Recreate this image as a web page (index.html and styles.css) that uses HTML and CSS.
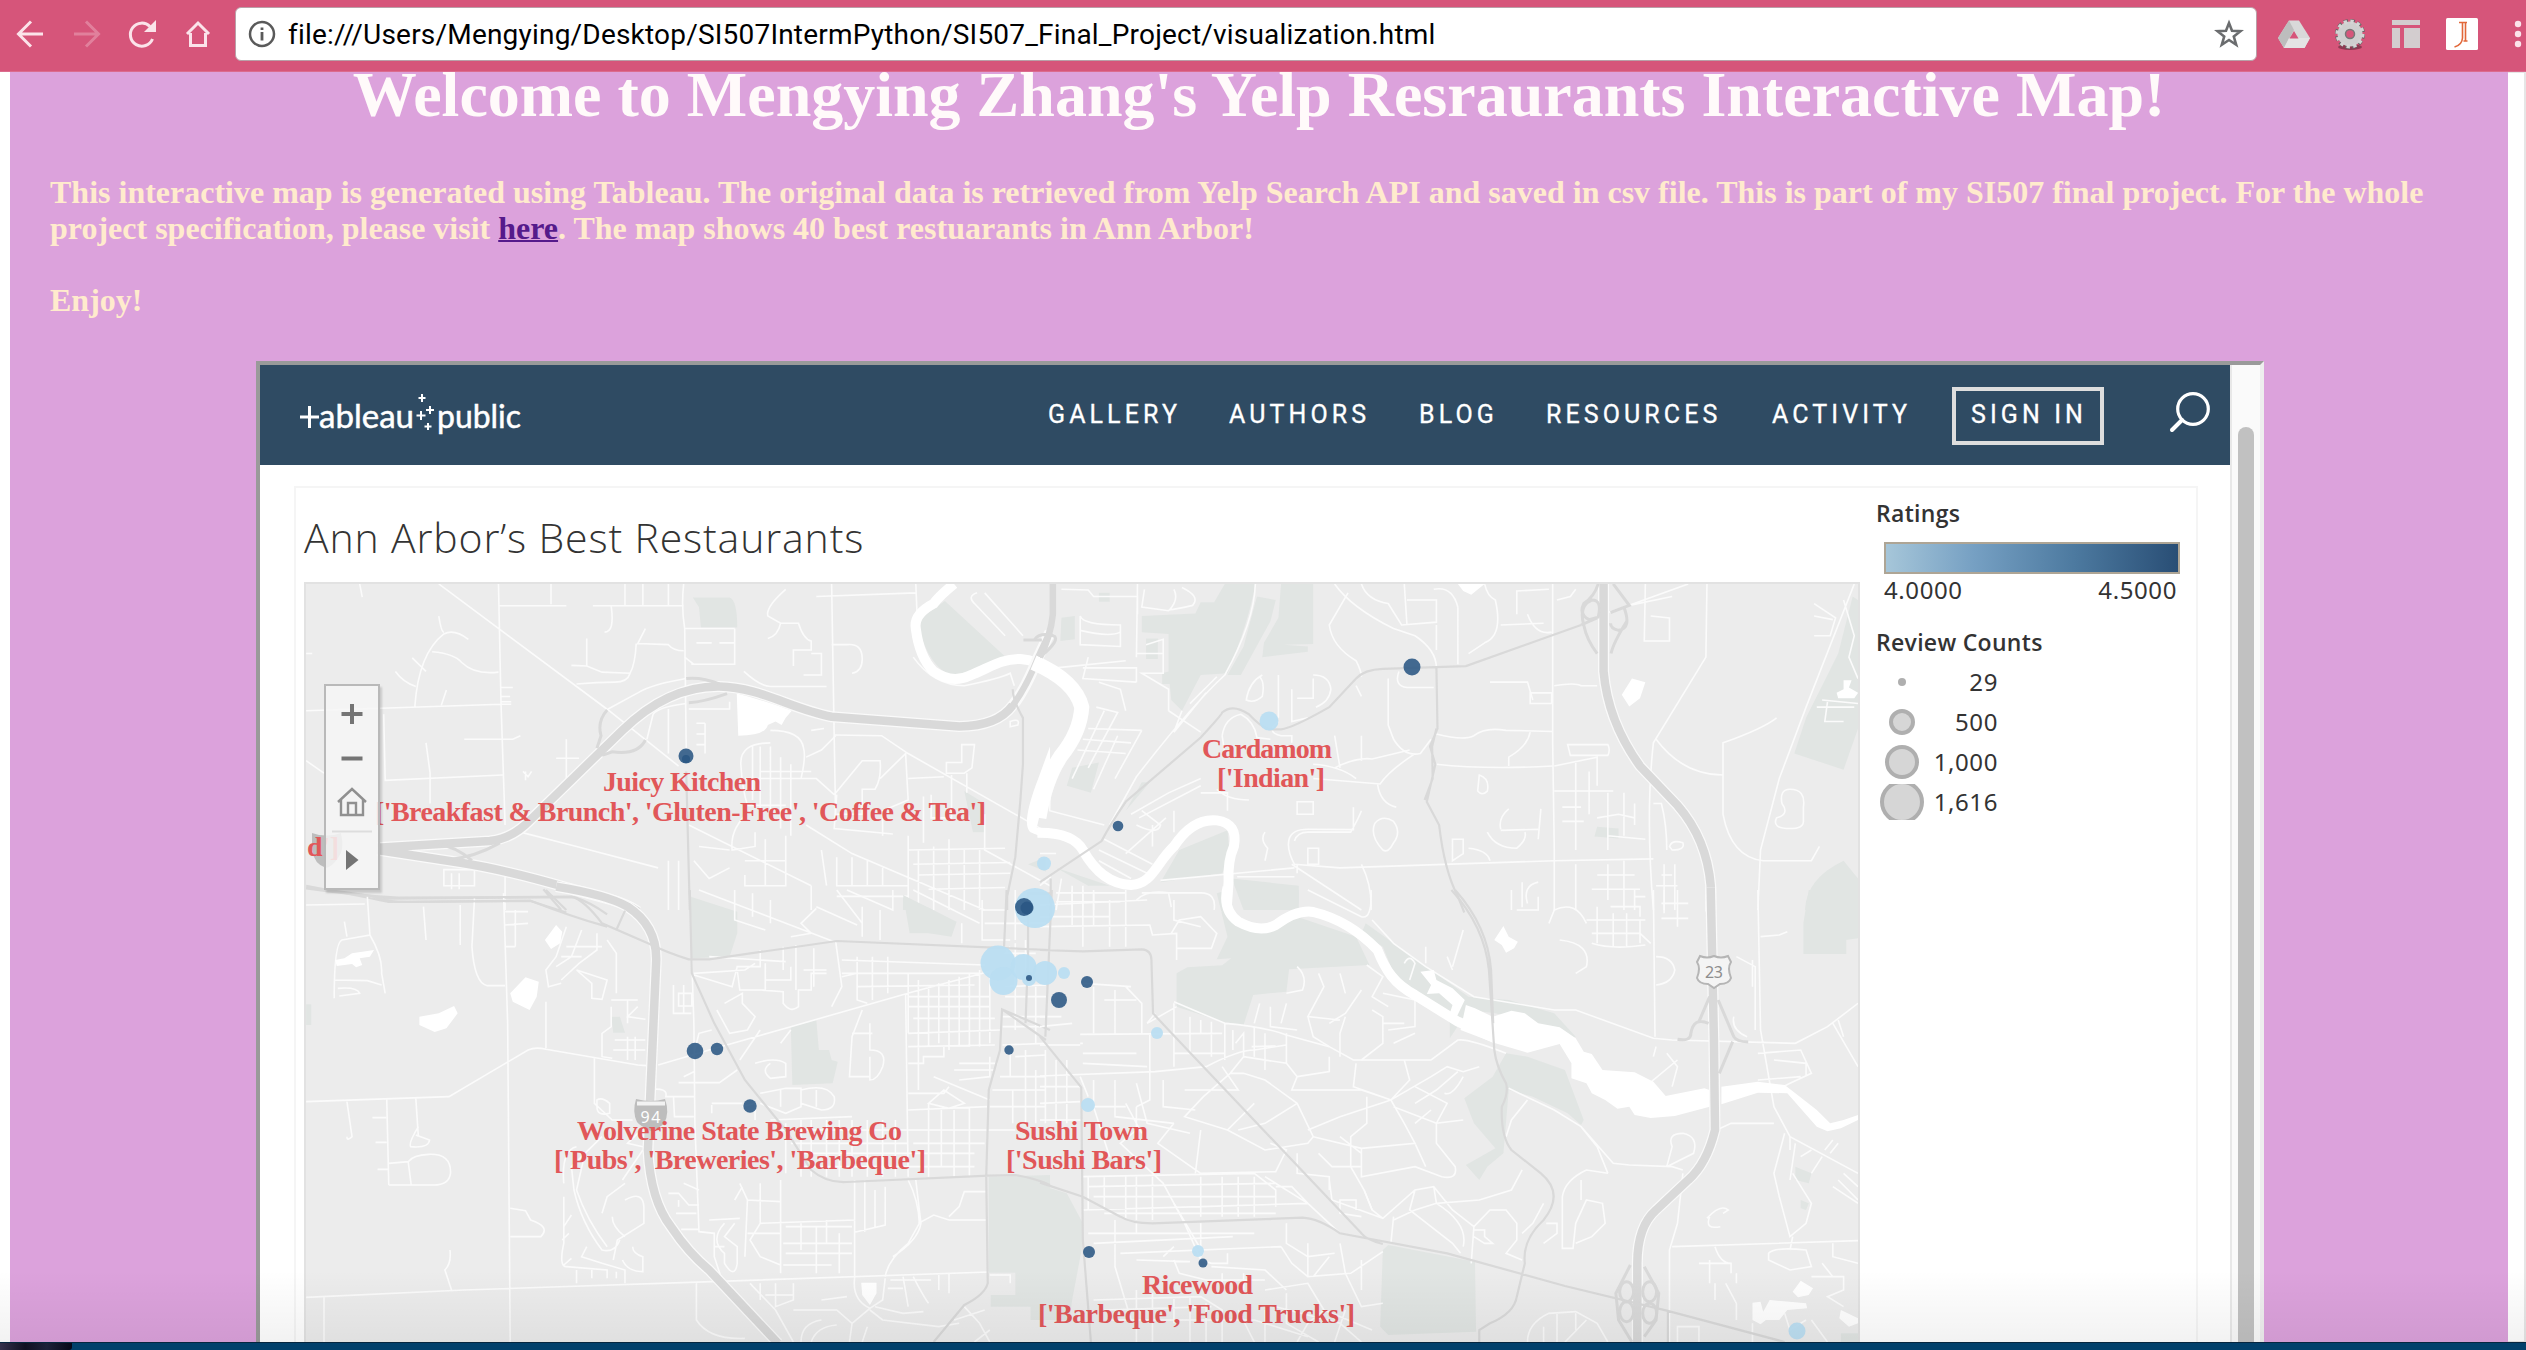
FILE: index.html
```html
<!DOCTYPE html>
<html lang="en">
<head>
<meta charset="utf-8">
<title>visualization.html</title>
<link rel="stylesheet" href="styles.css">
</head>
<body>
<header class="toolbar">
  <svg class="nav-icons" width="235" height="71" viewBox="0 0 235 71">
    <g fill="none" stroke="#fbe3ea" stroke-width="3">
      <path d="M43 34H19M31 21.500L18.500 34L31 46.500"/>
      <path opacity=".3" d="M74 34H98M86 21.500L98.500 34L86 46.500"/>
      <path d="M152.500 39A11.500 11.500 0 1 1 150 26.500"/>
      <path d="M187 34L198 23L209 34M190.500 33V45.500H205.500V33"/>
    </g>
    <path fill="#fbe3ea" d="M156 20V32H144Z"/>
  </svg>
  <div class="omnibox">
    <svg width="28" height="28" viewBox="0 0 28 28"><circle cx="14" cy="14" r="12" fill="none" stroke="#5a5a5a" stroke-width="2.500"/><path d="M14 12V20.500M14 7.500V10" stroke="#5a5a5a" stroke-width="2.800"/></svg>
    <span class="url">file:///Users/Mengying/Desktop/SI507IntermPython/SI507_Final_Project/visualization.html</span>
    <svg class="star" width="30" height="30" viewBox="0 0 30 30"><path d="M15 4L18 11.800L26.500 12.200L19.800 17.500L22.200 25.800L15 21L7.800 25.800L10.200 17.500L3.500 12.200L12 11.800Z" fill="none" stroke="#6a6c6e" stroke-width="2.600"/></svg>
  </div>
  <svg class="ext" width="269" height="71" viewBox="2257 0 269 71">
    <path fill="#d9d9d9" d="M2289 20.500H2299L2310 38L2304.500 48H2284L2278 38Z"/>
    <path fill="#bdbdbd" d="M2289 20.500L2294 30L2284 48L2278 38Z"/>
    <path fill="#e4e4e4" d="M2289 38H2310L2304.500 48H2284Z"/>
    <path fill="#d6557a" d="M2294 31L2298.500 38.500H2289.500Z"/>
    <ellipse cx="2350" cy="47" rx="12" ry="3" fill="#8f3a52"/>
    <circle cx="2350" cy="34" r="12.500" fill="none" stroke="#666" stroke-width="5" stroke-dasharray="4.200 2.345"/>
    <circle cx="2350" cy="34" r="8.500" fill="none" stroke="#cfcfcf" stroke-width="8"/>
    <circle cx="2350" cy="34" r="12.500" fill="none" stroke="#d5d5d5" stroke-width="4" stroke-dasharray="3.200 3.345"/>
    <circle cx="2350" cy="34" r="4.500" fill="#d6557a" stroke="#777" stroke-width="1.500"/>
    <path fill="#d3cdcf" d="M2392 20H2420V25H2392ZM2392 28H2400V48H2392ZM2404 28H2420V48H2404Z"/>
    <rect x="2446" y="18" width="32" height="32" rx="1.500" fill="#fff"/>
    <path d="M2459 22.500H2467M2462.500 23V38Q2462 45 2454.500 47M2465.500 23V41M2463.500 41H2467.500" fill="none" stroke="#e2683a" stroke-width="1.600"/>
    <g fill="#fbe3ea"><circle cx="2518" cy="24" r="3.200"/><circle cx="2518" cy="34" r="3.200"/><circle cx="2518" cy="44" r="3.200"/></g>
  </svg>
</header>

<main class="page">
  <h1>Welcome to Mengying Zhang's Yelp Resraurants Interactive Map!</h1>
  <p class="intro">This interactive map is generated using Tableau. The original data is retrieved from Yelp Search API and saved in csv file. This is part of my SI507 final project. For the whole<br>project specification, please visit <a href="#">here</a>. The map shows 40 best restuarants in Ann Arbor!<br><br>Enjoy!</p>

  <div class="frame">
    <div class="frame-body">
      <nav class="site-nav">
        <svg class="logo" width="226" height="60" viewBox="0 0 226 60">
          <g class="logo-text"><text x="19" y="36.500" textLength="95" lengthAdjust="spacingAndGlyphs">ableau</text><text x="137" y="36.500" textLength="84" lengthAdjust="spacingAndGlyphs">public</text></g>
          <path d="M122 3V11M118.500 7H125.500M121 20V29M116.500 24.500H125.500M130 15V23M126 19H134M128 32V39M124.500 35.500H131.500" fill="none" stroke="#fff" stroke-width="2"/>
          <path d="M0 26H19M9.500 15V37" stroke="#fff" stroke-width="3"/>
        </svg>
        <div class="links"><span>GALLERY</span><span>AUTHORS</span><span>BLOG</span><span>RESOURCES</span><span>ACTIVITY</span></div>
        <span class="signin">SIGN IN</span>
        <svg class="search" width="44" height="44" viewBox="0 0 44 44"><circle cx="25" cy="18" r="15.300" fill="none" stroke="#fff" stroke-width="3.200"/><path d="M14 29L4 39" stroke="#fff" stroke-width="4" stroke-linecap="round"/></svg>
      </nav>
      <section class="dashboard">
        <div class="view">
          <h2>Ann Arbor’s Best Restaurants</h2>
          <div class="map">
          <svg width="1552" height="760" viewBox="306 584 1552 760">
            <!-- northwest -->
            <g transform="translate(250 350) scale(.5102 .35714)">
              <g class="park"><path d="M868 693L940 693Q955 700 955 777L884 777L880 720ZM1362 703L1480 858L1400 910Q1360 925 1330 850Q1300 770 1325 740ZM1400 1235L1440 1270V1350H1417ZM1525 1440L1560 1420V1460ZM1280 1530L1340 1568H1280ZM864 1535L930 1568H864Z"/></g>
              <g class="minor">
                <path d="M370 655L702 1008L840 1165M487 655L492 990L500 1330M487 716H620M590 655V712M672 716H850M708 718Q715 790 695 790M850 655Q845 720 852 780L855 1115M820 655V714M770 655V714M735 655V714M215 655L220 692M110 1010L492 992H512M262 1020L265 1205L495 1190M370 745Q375 790 380 790M323 1000Q330 850 380 795Q400 780 428 810M357 845Q400 850 415 875Q440 910 487 902M318 862L345 900M285 900Q300 930 325 942M375 995L385 952M492 945H515M492 970H510M492 985H512"/>
                <path d="M775 780L760 822L820 825Q830 842 850 842M757 822Q755 880 745 905L690 902L660 885V808M745 905Q740 930 715 930Q680 930 640 935M660 885L630 883M852 780H950M865 880H950V780M875 820H905M920 820H950M852 860L870 880M855 920Q790 935 760 960L702 1005M855 990Q800 1000 790 1020L778 1090M940 985V1005H860M820 1005V1130M1110 690L1305 680M1140 655L1145 1080L1148 1320M1305 655L1308 760M1050 670Q1010 720 1015 745L1040 765H1075Q1085 810 1100 815V840H1065V885M1040 765Q1035 800 1015 808M1100 850H1120V910H1085M968 900Q1000 942 1020 942L1130 942M1140 825H1170Q1200 820 1200 865Q1200 900 1180 905M1425 680Q1405 690 1420 710L1480 800M1440 680L1515 800M1300 860Q1340 940 1400 940Q1470 920 1490 905L1498 940"/>
                <path d="M1145 1078L1238 1080L1290 1130L1568 1355M1020 1065Q1080 1065 1085 1115Q1090 1140 1080 1200M1020 1100Q960 1100 962 1160Q965 1230 975 1275H1050M985 1110V1260M1000 1110V1320M1020 1110V1300M1040 1140V1340M1060 1160V1360M1000 1180H1100M970 1200H1110L1145 1245M1145 1245L1200 1150H1235Q1238 1200 1225 1230L1200 1230V1300H1150M1235 1200L1285 1130L1290 1260L1240 1290L1240 1360M1290 1200L1360 1195M1395 1105H1420L1415 1170L1400 1185H1365V1155H1395ZM1375 1190V1310H1335V1245M1440 1300V1400L1568 1500M1320 1250V1380M1405 1185V1240M1150 1245L1145 1340L1260 1355"/>
                <path d="M860 1330L1100 1500M980 1290Q940 1340 945 1400L990 1390V1350M1010 1370V1500M1050 1360V1500H970V1470M970 1430H1050M880 1390L940 1400M870 1430L900 1480L940 1450M1090 1330L1180 1410L1440 1568M1120 1400L1130 1500M1150 1420V1500H1290M1180 1500V1420M1210 1500V1430M1240 1500V1450M1290 1360V1540M1310 1400V1550M1340 1390V1568M1370 1370V1568M1400 1400V1568M1430 1400V1568M1290 1400L1480 1395M1300 1440L1490 1435M1310 1470L1490 1465M1330 1510L1480 1505M1100 1500V1568M1150 1530H1290M820 1430V1568M840 1430V1568M620 1090V1230M600 1143H645M420 1090L515 1090L530 1080M345 1100L353 1185V1270M380 1455H440V1500H380ZM395 1465V1510M410 1465V1510M440 1430L440 1460M500 1470V1568M530 1350L640 1390L800 1450M110 850H122M110 1150L145 1185M540 1180V1205M535 1180L545 1195L552 1180M875 1045H892M875 1075H892M875 1105H892M892 1045V1130M1100 1065L1125 1060M1148 1080L1120 1120L1090 1140M1490 1040Q1510 1030 1505 1050L1490 1055Z"/>
              </g>
              <g class="water"><path d="M954 962Q1005 980 1062 1010L1050 1030L1042 1050L1030 1040L1015 1050Q1010 1080 957 1080Z"/><path class="river" d="M1380 655Q1350 690 1340 710Q1300 740 1305 780Q1312 860 1340 900Q1375 935 1410 912C1450 890 1470 865 1510 865C1540 868 1555 885 1575 900"/><path d="M1568 1110L1545 1200Q1510 1330 1530 1350Q1550 1365 1568 1358V1342L1542 1338L1568 1180Z"/></g>
              <g class="road">
                <path class="case" d="M250 1394L470 1375Q515 1368 550 1315L730 1065Q820 940 920 942C1000 944 1060 1005 1140 1027L1390 1054Q1465 1054 1495 995Q1520 950 1545 860L1568 790M250 1400L410 1435Q500 1455 620 1505L710 1540Q740 1552 760 1572"/>
                <path class="hwy" d="M250 1394L470 1375Q515 1368 550 1315L730 1065Q820 940 920 942C1000 944 1060 1005 1140 1027L1390 1054Q1465 1054 1495 995M250 1400L410 1435Q500 1455 620 1505L710 1540Q740 1552 760 1572"/>
                <path class="ramped" d="M1490 1005Q1520 950 1545 860L1568 790"/>
                <path class="mid" d="M370 1385Q405 1390 435 1430M390 1427Q440 1420 490 1380M855 920Q885 915 920 935M860 988Q890 985 935 962M700 1008Q680 1040 688 1080L680 1115M775 1092Q760 1135 710 1125L690 1135M1516 812H1552"/>
                <path class="art" d="M855 1180L862 1568M110 1505Q180 1515 270 1536L635 1532Q665 1545 700 1580M110 1500Q220 1530 270 1545L550 1543L620 1575M575 1510L610 1568M1495 950Q1495 980 1515 1030L1515 1160L1510 1260L1500 1420L1484 1530V1568M1500 990L1525 920"/>
              </g>
            </g>
            <!-- northeast -->
            <g transform="translate(1040 350) scale(.53571 .35714)">
              <g class="park"><path d="M110 680H130V705H110ZM190 745L290 738L300 706H325L345 655L402 655Q390 760 350 905L300 910L265 1010L245 980L242 935H228V905L240 900L240 795L190 790ZM405 690L440 700L430 760Q415 800 375 910H350L380 830ZM450 655H510V823L455 825L500 830V845L415 860L418 820L445 750ZM40 750L65 745V810L38 815ZM198 808H220V865H198ZM60 1170L110 1155L95 1240L50 1220ZM190 1210H205L160 1290ZM350 1345L355 1430L340 1465L225 1490L260 1400ZM358 1480L483 1500V1568H380ZM1517 690L1527 700V1060L1500 1175L1408 1130L1430 1030L1490 850ZM1040 1335L1080 1340V1368L1035 1362ZM1500 1430L1527 1480V1568H1428Q1430 1480 1500 1430ZM30 1450L130 1500L90 1500Z"/></g>
              <g class="minor">
                <path d="M40 670L90 672L100 690L182 690V740M182 655L180 860M75 745Q80 770 150 770V830L75 825ZM75 785Q130 805 150 790M195 670L190 720L240 730Q260 700 250 670M265 665Q300 690 285 715Q255 725 240 728M180 850L230 850V810L198 825M402 655Q400 760 345 910Q280 1000 180 1195L130 1330M230 850V905L190 905L240 950V1010M160 870L30 890M90 860L80 920L180 930M80 890H180V930M110 930L150 950L160 1010M105 1000L145 1015L90 1170M90 1060L190 1065M80 1090L170 1100M70 1120L160 1130M120 1010L60 1200M145 1080L100 1230M190 1065L140 1200M240 1010L300 1070M265 1010L250 1070L310 960M330 915L280 990M10 900L60 950L80 1060L20 1180L18 1290L120 1330"/>
                <path d="M550 655Q580 720 660 780L700 800Q740 840 740 890M575 680L540 770Q545 830 590 870Q600 900 600 915M600 655Q610 700 650 710L675 770L740 762V700H685M680 655L685 770M830 655Q835 690 850 700Q865 800 830 820L800 850M780 720V880M740 770V840M735 670Q770 660 780 720M957 655V1100L960 1400L960 1570M890 740V675L950 670M860 770L940 765M910 740Q925 800 955 790M965 700L990 690L1000 670M1130 655L1128 815H1175V750L1140 745M1245 655L1243 860L1145 1100Q1130 1300 1145 1568M1180 690L1100 715L1210 655M1060 735L1100 715M1520 655L1430 1000L1380 1200L1345 1400L1340 1568M1445 710L1485 750L1475 800L1445 800M1445 745L1480 755M1500 700L1520 800L1510 860L1527 920M1460 980L1527 990M1450 1000H1520M1470 985L1465 1040L1500 1040"/>
                <path d="M415 910Q390 930 385 980Q400 990 415 970Q420 930 410 915M445 910V1030M470 950V1040L500 1030M510 920V975H480M510 910Q540 910 543 950Q540 985 515 1000M590 940L600 970M445 1040Q420 1070 450 1080H470V1100M340 1080Q345 1030 375 1020Q400 1040 405 1085L430 1090M340 1080L345 1130M670 900Q660 940 685 945H735M650 920V1050L660 1090Q680 1140 710 1130L730 1090M740 1075Q790 1095 810 1080Q830 1055 870 1065L957 1068M740 1160Q830 1175 957 1165M915 1070Q910 1110 875 1140V1165M840 930H910L920 980M915 960H955V990H915ZM550 1170Q590 1140 620 1145L690 1120M510 1200L635 1215Q650 1180 700 1130M510 1160Q560 1165 590 1200M480 1265H510V1300H480ZM630 1215Q635 1270 665 1280M600 1080V1150M550 1080L560 1170M625 1325Q640 1300 660 1320Q675 1350 660 1380Q650 1410 640 1400Q615 1360 625 1325M820 1190Q840 1200 835 1235Q825 1250 817 1235ZM770 1370H790V1410L770 1430ZM860 1345L930 1342M875 1285Q855 1310 860 1342M935 1285L930 1370M835 1350Q850 1395 890 1395Q910 1370 905 1350M800 1395Q835 1400 840 1430M465 1370Q470 1342 500 1342L585 1343V1280M475 1375Q480 1350 500 1350H580Q595 1310 600 1290M465 1370Q460 1400 475 1440L560 1450L960 1430M500 1395H520V1440H500ZM420 1350Q410 1370 425 1395L420 1430M960 1235H1070M960 1165L1040 1140V1220M985 1105H1060Q1065 1120 1060 1135H990ZM960 940Q1000 930 1010 940H1040M1000 1150V1400M1025 1180V1300M1060 1240V1400M975 1280H1010M975 1320H1015M1040 1310L1080 1300L1110 1310M1060 1360L1130 1370M1090 1240V1360M1110 1270V1330M1150 1090Q1200 1190 1275 1190V1100Q1350 1060 1375 1030M1275 1190V1300Q1290 1420 1350 1430H1440L1455 1390M1385 1270Q1380 1230 1400 1230Q1430 1230 1425 1280V1320Q1425 1340 1400 1340Q1365 1340 1375 1310Q1400 1300 1385 1270M1145 1270L1160 1270Q1170 1330 1170 1400M1175 1390Q1180 1370 1200 1380Q1205 1400 1180 1400ZM960 1430L1145 1425M1000 1440V1568M1060 1440V1540M1090 1430V1568M1040 1470H1110M1030 1510H1120M1165 1440V1568M1185 1440V1568M1160 1470H1180M1150 1500H1190M900 1490V1560M930 1490Q900 1500 910 1550"/>
                <path d="M180 1330Q220 1360 225 1330L190 1290M170 1300L240 1240L300 1200M185 1310L300 1220M120 1370L210 1440M110 1400L200 1465M110 1430L170 1480M160 1410L235 1310M250 1290V1350M210 1330V1390M225 1485L475 1450M368 1475H475M470 1440L600 1568M0 1410H30M20 1475L0 1500M40 1480L30 1568M60 1500V1568M80 1500V1568M100 1520V1568M30 1520H160M30 1545H150M190 1520H300Q330 1520 325 1568M600 1440Q620 1500 618 1568M480 1440V1465M180 1540Q200 1510 240 1520L245 1560M300 1240H350V1290M330 1230Q350 1260 390 1260"/>
              </g>
              <g class="water"><path d="M780 655H830L805 685L790 675ZM1105 920L1130 930L1120 975L1100 998L1086 965ZM1500 925H1515L1510 945L1527 960L1520 975H1490L1487 960L1500 950Z"/><path class="river wide" d="M-12 875Q65 925 78 1000Q75 1070 40 1135Q10 1200 -2 1310"/><path class="river" d="M-5 1352Q60 1350 80 1400Q115 1495 170 1498C210 1495 215 1440 250 1390Q285 1310 330 1317Q370 1325 362 1390Q350 1430 352 1490L348 1575"/></g>
              <g class="road">
                <path class="ramped" d="M24 650V740Q20 800 0 860"/>
                <path class="case" d="M1052 650V900Q1060 1040 1120 1165L1190 1275Q1245 1370 1252 1500V1572"/><path class="hwy" d="M1052 650V900Q1060 1040 1120 1165L1190 1275Q1245 1370 1252 1500V1572"/>
                <path class="mid" d="M0 860Q40 810 25 800Q0 790 -10 810M1042 655Q1035 690 1015 710Q1005 740 1025 755L1042 748Q1050 700 1030 700Q1005 715 1015 770Q1020 810 1040 850M1070 655L1100 715L1065 735M1090 720Q1105 780 1080 785Q1065 780 1065 765M1095 760Q1070 820 1066 850M1010 770L1040 750"/>
                <path class="art" d="M0 1490L115 1375Q130 1330 160 1265L300 1085Q340 1020 340 1015Q360 990 390 1020Q415 1060 430 1062H450Q470 1060 540 1000L590 920Q605 895 640 893L795 885L1010 770M740 890L742 1060L728 1110L738 1160L722 1265L745 1330Q755 1460 780 1530L792 1575M740 1060L732 1110L733 1200L718 1260M20 1568V1480"/>
              </g>
            </g>
            <!-- southwest -->
            <g transform="translate(250 890) scale(.5102 .33333)">
              <g class="park"><path d="M864 20L955 65V130L940 200L866 205ZM1280 15L1385 95L1375 140L1330 130H1293ZM1060 410L1110 390L1115 480H1135L1140 510L1152 515L1142 580L1063 585ZM708 380H725L735 428H712ZM110 343H120V405H110ZM1448 860L1568 855V1290H1530V1250H1452V1215H1500V1148H1448Z"/></g>
              <g class="minor">
                <path d="M110 45L225 42M340 50L345 150M412 45V165M440 25L435 170Q440 280 465 287H500M230 20L235 135L180 150Q165 160 165 325M235 135Q260 200 258 250L265 310M165 270L230 272L258 285M172 295Q210 290 215 310L175 318M110 635L390 620L545 480Q560 470 580 478L760 525L777 527M580 335V475M497 10L505 400L510 1356M500 65H545M500 105L545 100M500 170H520M520 60V170M325 625L330 740M268 628L272 885M190 635L200 740Q190 755 190 740M330 710Q310 760 315 770Q350 775 352 750L325 735M272 820L310 815Q320 795 350 793Q395 790 393 850Q390 885 360 885H272M310 815L316 885M240 683H267M250 838H270M246 757H268M392 1080Q395 1120 382 1140L395 1200M110 1222L420 1200L905 1175L1448 1146M145 1222V1356M185 95L190 140"/>
                <path d="M620 110L600 200L580 240L585 290L610 280M650 120L630 200L600 230M680 130V180L645 220L610 270M700 150L718 190V310M640 240L700 270L690 328L670 325V280L640 240M620 170H690M610 200H650M708 330H760M708 350V410L690 430V500L710 505M740 330V400M760 350L740 380L775 388M715 450H775M740 440V510M755 440V510M712 480H775M675 505V640L710 690L750 690M680 630Q690 620 705 640V670Q680 680 680 650ZM510 955L540 962L550 990Q590 1010 570 1040H510M780 700L740 760L770 770M640 770Q610 780 615 880M690 740L630 830L635 900Q650 1000 690 1080Q715 1090 725 1050M655 800L640 900Q660 990 700 1070M735 880L700 920L690 970M770 780L730 870M735 930Q770 900 772 950V1000L720 1050L712 1110M710 980Q710 1010 735 1040M615 920V1060Q605 1130 620 1130L700 1140V1165M630 975L615 1010M625 1030L612 1050M660 1070L650 1100L690 1120L735 1140V1180M750 1070Q750 1090 770 1100V1145Q740 1145 730 1110M630 1105L615 1125M640 1140V1180M670 1140V1165M718 1145V1165"/>
                <path d="M866 210L870 400L872 700L880 1025L910 1030V1100L925 1170M850 285V370M830 285V370H865M840 310H866V348H840ZM780 600Q820 590 815 620H870M830 620L832 680H870M905 640H965M905 670V645M965 650L990 640V690M870 545L850 560M840 578H920L955 540M870 250L970 240L990 220M1000 180V230H955L945 290L870 255M1148 155L1160 290L1140 350M900 200L1050 215M955 240L960 300H1010V220M1010 270H1060V230M1000 300L1045 305V340Q1060 370 1075 350V300H1100V250H1130M930 340L965 310V340L990 380L975 420L940 430L915 360M800 525L900 480L1060 410L1300 305L1460 240M870 490L880 430L905 420M1045 170V240M1070 165V300M1105 175V290M1085 240H1130M960 510L1000 420M990 520Q1030 500 1050 520V560L1020 565Q1000 540 1020 520M1060 420L1040 460M1160 260L1190 250V330L1210 340M1190 200V310M1220 200V330M1250 200V310M1160 210L1440 225M1160 250H1430M1190 290L1420 285M1290 250V430M1310 270V600M1330 290V470M1350 280V460M1370 270V480M1390 260V470M1410 250V470M1430 240V470M1450 240V460M1290 320H1450M1290 350H1450M1300 385H1460M1290 430L1470 420M1290 470L1460 465M1200 360L1180 440L1175 560H1215M1215 400V480Q1250 480 1240 530Q1230 570 1215 570V500M1180 430H1220M1285 310L1290 860M1290 520H1320V500H1360V470M1390 520H1465M1380 540H1460M1390 570L1450 560V500M1290 610H1360L1370 590M1340 560L1450 630M1330 640L1360 600L1400 640L1370 655ZM1290 660L1445 650M1080 600Q1130 580 1145 620Q1150 660 1120 660L1080 640ZM1000 610L1050 595H1080V650L1050 670L1000 640M1040 600V650M1110 600V650M1290 720H1445M1050 700V850M1080 690V860M1100 690V860M1130 690V860M1155 690V860M1180 690V860M1210 690V860M1240 690V860M1265 690V860M1330 640V860M1355 660V830M1380 660V860M1410 650V860M1040 720H1290M1060 760H1290M1080 790H1420M1080 830H1420M1020 690L1180 680M1300 760H1440"/>
                <path d="M1290 870Q1310 930 1312 1000L1290 1060Q1250 1110 1245 1160M1305 870L1315 1000Q1310 1050 1260 1100M1310 1000L1340 975L1370 990H1445M1445 905H1400L1390 950L1370 980M820 910H840L860 945H880M840 930V950M850 880L880 900M835 970H875M845 1018H880M900 990L960 985M960 880L975 930L970 1100M975 930L1040 935V870M1000 880V1000L1185 990V960M1040 935V1150M1050 1010H1180M1045 1060H1180M1050 1090H1180M1045 1125H1140M1080 1000V1080M1110 1010V1150M1130 990V1060M1155 1030V1150M1185 870V1165M1205 870V1025M1225 900V1010M1245 890V1005L1185 1027M1000 1000L980 1050L1000 1100L1040 1125M930 1000Q900 1050 930 1090V1120Q950 1170 955 1120V1070L930 1040L950 1000M975 1030H1040M950 930L965 890M910 1070H930M1185 1165Q1180 1230 1215 1255L1180 1300L1175 1356M1245 1165L1240 1230L1215 1255M1225 1250L1280 1270L1320 1265M1215 1260L1240 1290L1350 1310L1390 1300M1250 1195H1280M1280 1160L1290 1250M1300 1160Q1320 1220 1330 1240M1350 1155V1200M1370 1150V1210M1450 1155H1490V1180M980 1180L1030 1260L1065 1356M1000 1180V1230M1030 1180V1250L1065 1230V1180M1010 1215H1065M1065 1260H1150L1180 1300M1080 1356Q1080 1300 1120 1290M1100 1356Q1110 1310 1150 1305M875 1180V1290Q900 1350 970 1345M1400 1250L1430 1300L1450 1356M1380 1290L1440 1260M1420 1356L1450 1320M1200 1356L1210 1310M1120 1230L1170 1220M1255 1170H1335"/>
                <path d="M1435 30V150H1490M1435 60H1480M1440 100H1560M1500 0V150M1520 150V240M1300 0L1430 100M1260 0V60L1170 0M1150 0L1200 100M1110 50L1190 105M1110 55L1080 100L1100 130L1060 140M1020 30V100M985 10V80M880 0L1145 155M1200 50V140M1235 60V150M1395 100V160M1490 170L1480 190H1540M1480 290L1560 285M1480 320H1560M1475 380H1560M1475 410H1560M1475 465L1560 460M1500 160V420M1540 290V460M1500 500L1560 495M1520 480V700M1540 540V700M1470 560H1560M1455 600H1560M1450 650H1560M1445 720H1500M1490 480V560M1495 600V700M950 0V90L1010 120"/>
              </g>
              <g class="water"><path d="M600 105L612 125L608 160L590 177L578 150ZM540 262L566 275L562 320L548 360L515 335L510 310ZM400 348L407 370L385 415L362 426L332 405V380L370 370ZM200 190L243 180L235 200L215 205L220 225L208 232L200 222L170 228L167 210L185 205ZM1198 1178H1228V1210L1215 1245L1200 1215Z"/></g>
              <g class="road">
                <path class="case" d="M600 -10Q700 15 740 50Q800 110 796 220L785 600L780 780Q785 930 825 1010Q860 1090 900 1140L1035 1360"/><path class="hwy" d="M600 -10Q700 15 740 50Q800 110 796 220L785 600L780 780Q785 930 825 1010Q860 1090 900 1140L1035 1360"/>
                <path class="art" d="M110 -5Q200 15 290 23L630 20Q655 30 690 100L780 160Q820 190 860 208H900L1150 153L1568 180M240 20Q270 36 310 36L550 32Q630 80 700 110M580 0L620 60M735 62L718 120M862 0L866 250L910 400L970 570L1050 720L1100 840Q1130 880 1170 876L1448 857L1500 855Q1540 865 1568 885M1483 0L1478 170M1568 10H1525L1525 200L1520 400M1568 420L1474 358L1470 480L1448 600L1443 860L1446 1180Q1440 1215 1400 1245L1340 1356M1474 358L1560 450"/>
              </g>
            </g>
            <!-- southeast -->
            <g transform="translate(1040 890) scale(.53571 .33333)">
              <g class="park"><path d="M330 10L350 0Q350 80 400 110Q440 120 480 80L590 140L615 225L465 238L460 305L398 315L380 405L340 395L255 350V250L275 232L340 226L357 205L330 208L350 140ZM370 0H483V40H450L420 30ZM608 100L800 320L875 330L960 370L1000 440L985 450L950 410L900 390L850 370L800 360L765 445V400L755 365L700 310L660 250L640 170L600 130ZM870 490L910 500L980 540L1015 690L1010 705L985 670L920 620L875 600L865 790L835 830L820 870L795 825L850 775L810 700L792 625L845 560ZM640 1080L650 1065L812 1115L814 1325L650 1335L635 1310ZM0 885L50 910L80 1000V1060L60 1230L55 1290H0ZM1435 0H1527V145L1505 150V192H1425V100ZM1410 830L1440 850L1435 880L1410 870ZM1420 930L1435 940L1430 960L1420 955ZM1495 1330H1527V1356H1495Z"/></g>
              <g class="minor">
                <path d="M0 45L200 30M0 80H130M0 110L205 105L210 135L255 130V210M60 0V105M80 0V170M100 0V105M130 30V170M160 0V170M245 130L260 90L300 80L330 130L320 175H255M250 30V90L300 110M250 335L345 400Q420 410 460 435L540 470L585 510L730 510L780 450Q800 445 870 490M255 350L200 400L215 370M75 433L340 430M205 435V545M0 558L215 545L310 530Q370 480 400 480L460 465M0 640L75 635M80 490H180M80 520L200 530M75 560L90 620M140 300V430M100 290V430M160 290L190 340V430M80 280L170 290M120 330H180M250 340V530M280 380V490M300 390V430M320 395V500M345 400V510M250 490H345M0 380H40M0 410L60 400M0 465H75M10 480V700M30 510V700M50 510V700M0 590H75M0 690H80M80 460H75"/>
                <path d="M365 460L380 430V500L355 550L305 620L270 680L350 720L420 780L500 760L510 740L480 640L420 570L380 550L355 550M380 500L460 520L480 560L470 600H600L655 630L730 560L760 530L790 545L820 530M460 520V430M480 560L540 545V500M420 430V540M400 410V500M590 520L585 590L620 610L655 630L680 700L700 760L600 775L510 740M655 630L560 680L500 720M610 620V700L580 740V830L605 900L620 960M480 640L420 700L370 720M350 720L400 640M270 600H370L340 530M230 570V650L290 660M180 580L200 700L280 730M140 570V680L250 700M100 570V650H160M160 640L190 730M100 650L130 800M730 660L700 700M700 590L760 640L740 700L660 650M680 510L690 570L655 630M780 545L740 600L700 640M790 560Q770 620 755 610M560 740L600 790V830H545L520 790M600 775V860L700 830L750 860Q780 870 775 830L740 760V700L790 690M700 760L720 830M250 700L220 760L300 850L440 845L460 780L430 760M300 720L290 850M180 650V720L150 760L230 880L270 1000L300 1110M205 540V630L180 650"/>
                <path d="M80 860L400 850L440 900V950M90 890L440 880M100 920H440M80 960L300 950L500 940M120 970H440M90 860V960M120 860V960M160 860V990M180 860V990M210 860V990M300 860V980M340 860V980M370 860V980M400 860V980M250 940L290 1050L305 1090M440 890H470L500 940L560 1030M540 900V860L480 850V790M420 860L500 940M540 870L545 930L640 985L700 900L735 890L770 960L810 1010L805 1120M600 980L560 970V930H590V960M605 900L620 960L640 985M660 980L655 1060M700 900L690 960L770 1060L785 1090M740 940Q800 1000 790 1070M735 890L740 940L820 930L880 900L900 840M660 990L700 960L740 940M810 1010L840 960H870L890 1000V1050L870 1090L900 1110M810 1020H830V1040L845 1060L830 1060L810 1040M940 940L920 1000L900 1030M945 1000H965V1030L940 1060M1060 850L1020 840Q980 870 975 920V1075H995L1000 1000L1020 930L1050 940L1055 1000L1030 1040L1000 1060M1010 870V930M140 990V1130L170 1290M90 1030H400M180 1030V1000M100 1060L360 1040M180 1110L280 1115M150 1090L450 1070M230 1100L250 1070M300 1000V1110L320 1120H350V1090M320 1130L420 1140L460 1200M340 1150V1200M310 1170H420M250 1110L260 1150L310 1170M380 1150V1200M460 1000V1060L500 1100L550 1090M500 1060V1160L580 1150L640 1085M540 1100L510 1160M450 1070L470 1120L500 1160M560 1060L570 1150L600 1250L640 1240M600 1110V1200M420 1200L500 1180L530 1260L620 1320M460 1210V1300L520 1356M100 1230L300 1220L340 1260V1356M120 1260L320 1250M130 1290H400L500 1340M180 1200V1356M210 1210V1356M250 1220V1300M280 1220V1356M310 1240V1356M370 1260L400 1356M420 1260V1356M440 1250L560 1300L600 1356M530 1260L500 1300L480 1356M570 1260L550 1356"/>
                <path d="M500 0L600 80Q620 90 618 0M620 90L660 160L720 230L810 320L960 360H1000L1145 445L1180 450L1410 460L1470 410L1527 340M875 595L960 660L1010 710L1070 820L1100 825L1180 830L1200 840M1010 710L1040 770L1060 850M910 630L880 690L870 740M1145 0L1148 440M1340 0L1345 420L1370 650L1400 740L1527 850M1150 200Q1180 200 1185 240Q1180 280 1150 285M1065 50H1120V80M1020 100Q1000 30 960 60L950 100M1020 90H1130M1030 130H1120L1140 160M1040 50V160M1070 70V170M1095 70V170M1120 90V160M1030 160Q1070 180 1130 165M970 150Q1030 160 1020 230L1000 250M1165 0V70M1190 0V110M1160 40H1210M1160 85H1210M1345 140L1380 135L1395 125M1320 440Q1290 420 1295 380M1330 210V290M1300 200L1335 230V420M1340 490L1420 480L1440 550L1400 580L1375 600M1370 510L1430 520V560M1480 400L1527 530M1490 390L1500 440M1340 570L1420 560M1170 490L1190 530L1180 590M1150 470L1145 500M1190 510L1130 590M1170 830L1180 770Q1170 730 1200 730Q1230 740 1220 790L1170 830M1180 1070L1527 1052M1250 730L1290 700L1370 700M1200 850L1190 1000L1175 1080V1356M1390 730L1370 850L1380 920L1400 1040L1430 1000L1440 940L1405 850M1410 760L1400 870M1460 800L1440 850M1480 750L1465 780M1490 760L1475 790M1400 740V780M1440 780L1420 800M1490 870L1527 930M1480 890L1527 940M1500 850L1527 890M1360 1090Q1370 1070 1430 1080L1440 1130L1400 1140L1360 1110ZM1230 1120H1290V1150M1250 1110V1180M1260 1070Q1270 1120 1290 1120M1245 985Q1270 940 1285 960L1275 970M1250 980Q1240 1020 1270 1010M1260 1180V1230M1280 1180L1300 1240V1290M1300 1150V1180M1400 1080L1405 1040M1440 1160H1500V1200L1470 1220L1500 1250M1460 1120L1480 1160M1480 1060V1100L1527 1120M1390 1270L1400 1320L1430 1290M1330 1300V1356M1440 1290L1470 1356M910 1356Q910 1300 950 1270L1000 1265L1040 1300L1060 1356M940 1356V1310M965 1270V1356M1000 1270V1320M1020 1290L980 1356M1190 1356V1310H1230V1356M1110 0V60M1130 20H1110M880 0V60M930 20V60H890M680 220Q690 190 700 220L690 270M720 170V220M760 200L770 240M790 120L770 230"/>
                <path d="M395 470L440 468M360 420V480M480 230Q500 260 490 300L460 310M520 250L530 290L500 380L560 390M560 250L570 310M610 225L640 260L620 320L650 350M640 310L700 330V410L650 420M620 360L640 380V460L600 510M570 380L560 430V500M500 380L510 440L540 470M600 300L570 370L540 400M460 340L450 400M410 340L400 400M430 350V410L480 420M680 400L640 400M660 460L700 430"/>
              </g>
              <g class="water"><path class="river" d="M350 -8Q340 60 370 95Q410 130 440 105Q480 58 510 66C560 85 600 130 630 180C645 240 660 280 700 315L780 395L850 445"/><path d="M710 245L735 240L740 270L770 295L793 330L775 390L765 370L770 345L745 310L722 312L730 285ZM795 345L812 355L845 380L880 362L905 370L930 400L970 412L1000 445L1015 485L1030 492L1050 540L1110 547L1145 575L1168 618L1240 595L1250 600V650L1185 678L1140 684L1110 675L1100 650L1078 656L1055 630L1030 610L1020 580L992 565V520L970 462L910 488L850 460L785 420ZM865 108L875 140L892 155L885 175L870 188L862 165L848 150ZM1272 590L1340 575L1390 585L1410 610L1450 660L1475 700L1500 690L1527 675V690L1495 715L1470 724L1450 710L1395 610L1340 608L1272 643ZM1420 1172L1443 1195L1435 1215L1415 1222L1405 1205ZM1330 1238L1345 1235L1350 1265L1362 1230L1430 1240L1432 1255L1395 1260L1380 1290L1355 1290L1345 1303L1330 1290ZM1495 1260L1527 1285V1300L1510 1310L1492 1285Z"/></g>
              <g class="road">
                <path class="case" d="M1252 -8L1258 450L1260 720Q1245 820 1210 870L1150 960Q1115 1010 1115 1120V1356"/>
                <path class="hwy" d="M1252 -8L1258 450L1260 720Q1245 820 1210 870L1150 960Q1115 1010 1115 1120V1360"/>
                <path class="mid" d="M1190 448Q1215 455 1215 430Q1220 380 1248 400M1250 320L1230 395M1266 330L1295 440Q1300 455 1322 456M1293 455L1268 550M1102 1125L1075 1210L1080 1290L1105 1356M1128 1130L1155 1210L1150 1290L1128 1340"/>
                <ellipse class="mid" cx="1095" cy="1205" rx="13" ry="30"/><ellipse class="mid" cx="1138" cy="1205" rx="13" ry="30"/><ellipse class="mid" cx="1095" cy="1265" rx="13" ry="30"/><ellipse class="mid" cx="1138" cy="1270" rx="13" ry="30"/>
                <path class="art" d="M0 180L80 184L190 178Q208 180 208 210L211 370L240 420L600 1030Q610 1050 640 1062M0 440L77 592L80 1050L95 1356M0 878L80 920L150 980Q170 1000 210 1000L490 983Q520 985 560 1030L760 1090L980 1188L1170 1262L1390 1356M768 0Q830 110 838 240L848 480Q852 530 870 580Q875 610 862 650Q860 740 880 780L935 850Q980 910 940 990Q900 1050 905 1120L890 1220Q885 1270 840 1300L820 1320V1356M775 0Q836 110 842 240L846 400M22 0L10 440M1172 1262V1356"/>
              </g>
            </g>
            <!-- route shields -->
            <g class="shield"><path fill="#bdbdbd" d="M312 833Q326 838 341 833Q345 850 338 858Q332 867 326 868Q314 864 312 850Z"/><path fill="#bdbdbd" d="M636 1099Q651 1103 665 1099Q670 1113 664 1124Q659 1128 651 1131Q640 1126 637 1122Q632 1112 636 1099Z"/><path d="M638 1102.500H664V1104.500H638Z" fill="#f2f2f2" stroke="#f2f2f2" stroke-width="2"/><path fill="#f4f4f4" stroke="#b5b5b5" stroke-width="2" d="M1700 956Q1707 959 1714 956Q1721 959 1728 956L1731 962Q1727 968 1731 978Q1729 984 1720 984L1714 988L1708 984Q1699 984 1697 978Q1701 968 1697 962Z"/>
              <text x="640.500" y="1123" fill="#fff" textLength="20">94</text><text x="1705" y="978" fill="#8d8d8d" textLength="18">23</text></g>
            <!-- restaurants -->
            <g class="light"><circle cx="1269" cy="721" r="9.500"/><circle cx="1044" cy="863.500" r="7"/><circle cx="1035" cy="908" r="20"/><circle cx="998" cy="963" r="17.500"/><circle cx="1003.500" cy="981" r="14"/><circle cx="1023.500" cy="967" r="13"/><circle cx="1029" cy="979" r="7"/><circle cx="1045" cy="973" r="12"/><circle cx="1064" cy="973" r="6"/><circle cx="1157" cy="1033" r="6"/><circle cx="1088" cy="1105" r="7"/><circle cx="1198" cy="1251" r="6"/><circle cx="1797" cy="1331" r="8.500"/></g>
            <g class="dark"><circle cx="686" cy="756" r="7.500"/><circle cx="686" cy="759" r="4"/><circle cx="1412" cy="667" r="8.500"/><circle cx="1118" cy="826" r="5.300"/><circle cx="1024" cy="907" r="9"/><circle cx="1027" cy="908" r="6.500"/><circle cx="1029" cy="978" r="3"/><circle cx="1087" cy="982" r="6"/><circle cx="1059" cy="1000" r="8"/><circle cx="1089" cy="1252" r="6"/><circle cx="1203" cy="1263" r="4.500"/><circle cx="695" cy="1051" r="8.300"/><circle cx="717" cy="1049" r="6.200"/><circle cx="750" cy="1106" r="6.700"/><circle cx="1009" cy="1050" r="4.700"/></g>
            <g class="label"><text x="307" y="856" textLength="32">d']</text><text x="603" y="791" textLength="158">Juicy Kitchen</text><text x="375" y="821" textLength="611">['Breakfast &amp; Brunch', 'Gluten-Free', 'Coffee &amp; Tea']</text><text x="1202" y="758" textLength="130">Cardamom</text><text x="1217" y="787" textLength="108">['Indian']</text><text x="577" y="1140" textLength="325">Wolverine State Brewing Co</text><text x="554" y="1169" textLength="372">['Pubs', 'Breweries', 'Barbeque']</text><text x="1015" y="1140" textLength="133">Sushi Town</text><text x="1006" y="1169" textLength="156">['Sushi Bars']</text><text x="1142" y="1294" textLength="111">Ricewood</text><text x="1038" y="1323" textLength="317">['Barbeque', 'Food Trucks']</text></g>
          </svg>
          <div class="controls"><svg width="52" height="202" viewBox="326 686 52 202"><g fill="none" stroke="#747474"><path stroke-width="4" d="M341.500 714H362.500M352 704V724M341.500 758.500H362.500"/><path stroke-width="2.400" stroke="#909090" d="M338 802L352 789L366 802M341 800V815H363V800M348 815V803H356V815"/><path stroke="#ddd" stroke-width="2" d="M332 831.500H372"/></g><path fill="#747474" d="M346 850L358.500 860L346 870Z"/></svg></div>
          </div>
        </div>
        <aside class="legend">
          <h3>Ratings</h3>
          <div class="ramp"></div>
          <div class="range"><span>4.0000</span><span>4.5000</span></div>
          <h3 class="counts">Review Counts</h3>
          <ul>
            <li><svg width="50" height="36" viewBox="-25 -18 50 36"><circle r="4" fill="#afafaf"/></svg><span>29</span></li>
            <li><svg width="50" height="36" viewBox="-25 -18 50 36"><circle class="size" r="11"/></svg><span>500</span></li>
            <li><svg width="50" height="36" viewBox="-25 -18 50 36"><circle class="size" r="15"/></svg><span>1,000</span></li>
            <li><svg width="50" height="36" viewBox="-25 -18 50 36"><circle class="size" r="20"/></svg><span>1,616</span></li>
          </ul>
        </aside>
      </section>
    </div>
    <div class="scrollbar"><div class="thumb"></div></div>
  </div>
</main>
<div class="shade"></div>
<footer class="desktop"><div class="wallpaper"></div></footer>
</body>
</html>
```
FILE: styles.css
```css
* { box-sizing: border-box; }
body { margin: 0; width: 2526px; height: 1350px; overflow: hidden; position: relative; background: #fff; font-family: "Liberation Sans", sans-serif; display: flex; flex-direction: column; }
svg { display: block; flex: none; }
.toolbar { height: 72px; flex: none; background: #d6557a; border-bottom: 1px solid #db6c8e; display: flex; align-items: flex-start; }
.omnibox { width: 2022px; height: 54px; margin-top: 7px; background: #fff; border: 1px solid #b9a0a8; border-radius: 6px; display: flex; align-items: center; padding: 0 12px; }
.url { font: 28px/52px Roboto, sans-serif; color: #000; margin-left: 12px; padding-top: 1px; letter-spacing: .2px; white-space: nowrap; }
.star { margin-left: auto; }
.page { height: 1270px; flex: none; margin: 0 18px 0 10px; background: #dca2dc; overflow: hidden; box-shadow: 17px 0 0 -1px #fff, 18px 0 0 #e6e6e6; font-family: "Liberation Serif", serif; }
h1 { margin: -13px 0 0; font-size: 64px; line-height: 72px; font-weight: bold; color: #fffafa; text-align: center; white-space: nowrap; }
.intro { margin: 43px 40px 0; font-size: 32px; line-height: 36px; font-weight: bold; color: #ffebcd; white-space: nowrap; }
.intro a { color: #551a8b; text-decoration-thickness: 2px; }
.frame { width: 2008px; height: 1100px; margin: 43px 0 0 246px; border: 4px solid; border-color: #9a9a9a #eee #eee #9a9a9a; background: #fff; display: flex; }
.frame-body { width: 1970px; }
.scrollbar { flex: 1; background: #fafafa; border-left: 2px solid #e8e8e8; padding: 62px 6px 0; }
.thumb { height: 1100px; width: 16px; border-radius: 8px; background: #c1c1c1; }
.site-nav { height: 100px; background: #2f4b63; color: #fff; display: flex; align-items: flex-start; padding-left: 40px; font: 400 25px/30px Roboto, sans-serif; letter-spacing: 4.1px; -webkit-text-stroke: .3px #fff; }
.logo { margin-top: 26px; }
.logo-text { fill: #fff; font: 33px Lato, sans-serif; letter-spacing: 0; stroke: #fff; stroke-width: .5; }
.links { display: grid; grid-template-columns: 181px 190px 127px 226px 180px; margin: 35px 0 0 522px; }
.signin { width: 152px; height: 58px; margin-top: 22px; border: 4px solid #dedede; padding: 9px 0 0 15px; white-space: nowrap; }
.search { margin: 26px 0 0 64px; }
.dashboard { width: 1904px; height: 990px; margin: 21px 0 0 34px; border: 2px solid #f5f5f5; display: flex; }
.view { margin-left: 8px; width: 1556px; }
h2 { margin: 0; height: 94px; padding-top: 24px; font: 300 41px/50px "Open Sans", sans-serif; letter-spacing: .85px; color: #333; white-space: nowrap; }
.map { position: relative; width: 1556px; height: 764px; border: 2px solid #e2e2e2; background: #ececec; overflow: hidden; }
.map path, .map ellipse { vector-effect: non-scaling-stroke; }
.park { fill: #e1e5e3; }
.minor { fill: none; stroke: #fbfbfb; stroke-width: 1.6; }
.water { fill: #fff; }
.river { fill: none; stroke: #fff; stroke-width: 10; }
.wide { stroke-width: 15; }
.road { fill: none; stroke: #d9d9d9; }
.hwy { stroke-width: 8.5; }
.ramped { stroke-width: 6.5; }
.case { stroke: #fafafa; stroke-width: 11; }
.mid { stroke-width: 3; }
.art { stroke-width: 2.2; }
.shield { font: 16px "Noto Sans", sans-serif; }
.light { fill: #b9def2; fill-opacity: .93; }
.dark { fill: #2a5783; fill-opacity: .88; }
.label { font: bold 28px "Liberation Serif", serif; fill: #e15759; }
.controls { position: absolute; left: 18px; top: 100px; width: 56px; height: 206px; border: 2px solid #b9b9b9; background: rgba(246, 246, 246, .85); box-shadow: 2px 3px 2px rgba(0, 0, 0, .15); }
.legend { width: 320px; padding: 11px 0 0 16px; color: #333; font: 24px/28px "Noto Sans", sans-serif; letter-spacing: .6px; }
h3 { margin: 0; font: 600 23px/28px "Open Sans", sans-serif; letter-spacing: .3px; }
.ramp { margin: 15px 0 0 8px; width: 296px; height: 32px; border: 2px solid #aea595; background: linear-gradient(90deg, #a6c6d9, #76a0c3 30%, #4c799f 65%, #294e75); }
.range { margin: 2px 0 0 8px; width: 293px; display: flex; justify-content: space-between; }
.counts { margin-top: 24px; }
.legend ul { list-style: none; margin: 8px 0 0 1px; padding: 0; display: grid; gap: 4px; }
.legend li { display: flex; height: 36px; align-items: center; width: 121px; justify-content: space-between; }
.size { fill: #d6d6d6; stroke: #afafaf; stroke-width: 4; }
.shade { position: absolute; left: 0; right: 0; top: 1270px; height: 72px; background: linear-gradient(rgba(0, 0, 0, 0), rgba(0, 0, 0, .05)); }
.desktop { height: 8px; flex: none; background: #01406b; border-top: 1px solid #06263f; }
.wallpaper { width: 72px; height: 7px; background: linear-gradient(90deg, #34304a, #101022 35%, #1c2138 65%, #050818); border-bottom-right-radius: 3px; }
```
